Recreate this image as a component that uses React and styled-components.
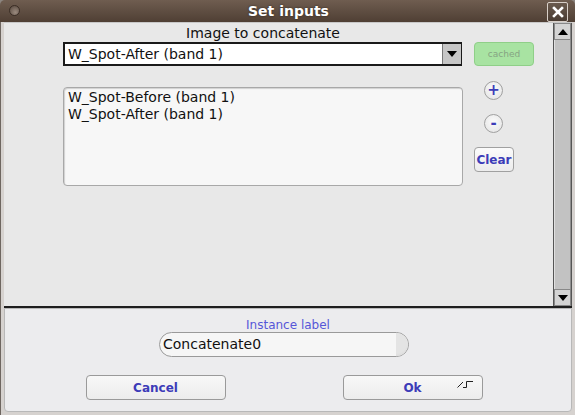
import React from 'react';
import styled, { createGlobalStyle } from 'styled-components';

const Global = createGlobalStyle`
  html, body { margin: 0; padding: 0; background: #3a3a3a; }
  body { font-family: "DejaVu Sans", "Liberation Sans", sans-serif; }
`;

function App() {
  return (
    <>
      <Global />
      <Window>
        <TitleBar>
          <Knob />
          <Title>Set inputs</Title>
          <CloseBtn>
            <svg width="12" height="12" viewBox="0 0 12 12">
              <path d="M2 2 L10 10 M10 2 L2 10" stroke="#fff" strokeWidth="2.6" strokeLinecap="square" />
            </svg>
          </CloseBtn>
        </TitleBar>
        <Frame>
          <TopPanel>
            <Content>
              <MainCol>
                <Caption>Image to concatenate</Caption>
                <Combo>
                  <ComboText>W_Spot-After (band 1)</ComboText>
                  <ComboArrow>
                    <svg width="10" height="6" viewBox="0 0 10 6"><path d="M0 0 H10 L5 6 Z" fill="#000" /></svg>
                  </ComboArrow>
                </Combo>
                <ListBox>
                  <ListItem>W_Spot-Before (band 1)</ListItem>
                  <ListItem>W_Spot-After (band 1)</ListItem>
                </ListBox>
              </MainCol>
              <SideCol>
                <CachedBtn>cached</CachedBtn>
                <RoundBtn $top={15}>+</RoundBtn>
                <RoundBtn $top={14}>-</RoundBtn>
                <ClearBtn>Clear</ClearBtn>
              </SideCol>
            </Content>
            <ScrollBar>
              <ScrollArrow>
                <svg width="10" height="6" viewBox="0 0 10 6"><path d="M0 6 H10 L5 0 Z" fill="#000" /></svg>
              </ScrollArrow>
              <Thumb />
              <ScrollArrow>
                <svg width="10" height="6" viewBox="0 0 10 6"><path d="M0 0 H10 L5 6 Z" fill="#000" /></svg>
              </ScrollArrow>
            </ScrollBar>
          </TopPanel>
          <Divider />
          <BottomPanel>
            <InstLabel>Instance label</InstLabel>
            <Field>
              Concatenate0
              <FieldCap />
            </Field>
            <ButtonRow>
              <ActionBtn>Cancel</ActionBtn>
              <ActionBtn>
                Ok
                <Corner>
                  <svg width="17" height="8" viewBox="0 0 17 8">
                    <path d="M0.5 7.5 L6 2 M6 7.5 H9.5 V1.5 H16" stroke="#222" strokeWidth="1" fill="none" />
                  </svg>
                </Corner>
              </ActionBtn>
            </ButtonRow>
          </BottomPanel>
        </Frame>
      </Window>
    </>
  );
}

export default App;

const Window = styled.div`
  width: 575px;
  height: 415px;
  display: flex;
  flex-direction: column;
  background: #8c8580;
  overflow: hidden;
`;

const TitleBar = styled.div`
  height: 22px;
  flex: none;
  display: flex;
  align-items: center;
  position: relative;
  background: linear-gradient(#6f5d50, #4f3f34);
  border-radius: 5px 5px 0 0;
`;

const Knob = styled.div`
  position: absolute;
  left: 9px;
  top: 5px;
  width: 9px;
  height: 9px;
  border-radius: 50%;
  border: 1px solid #3a2d25;
  background: radial-gradient(circle at 60% 70%, #9a8a7e, #55463c);
`;

const Title = styled.div`
  flex: 1;
  text-align: center;
  color: #fff;
  font-weight: bold;
  font-size: 14px;
  padding-left: 2px;
  text-shadow: 0 0 2px #2a1f18;
`;

const CloseBtn = styled.div`
  position: absolute;
  right: 7px;
  top: 2px;
  width: 19px;
  height: 18px;
  display: flex;
  align-items: center;
  justify-content: center;
  border: 1px solid #d8cfc8;
  border-radius: 2px;
  background: linear-gradient(#6a5a4e, #4a3c33);
`;

const Frame = styled.div`
  flex: 1;
  display: flex;
  flex-direction: column;
  padding: 0 3px 3px 3px;
  background: #d6d2cf;
  border-left: 1px solid #6e6660;
`;

const TopPanel = styled.div`
  height: 283px;
  display: flex;
  background: #e8e8e8;
  border-top: 1px solid #c8c8c8;
`;

const Content = styled.div`
  flex: 1;
  display: flex;
  padding: 2px 0 0 59px;
  gap: 11px;
`;

const MainCol = styled.div`
  width: 400px;
  display: flex;
  flex-direction: column;
`;

const Caption = styled.div`
  font-size: 14px;
  color: #111;
  text-align: center;
  height: 17px;
  line-height: 17px;
`;

const Combo = styled.div`
  height: 24px;
  box-sizing: border-box;
  display: flex;
  border: 2px solid #1a1a1a;
  border-right-width: 1px;
  background: #fff;
  width: 399px;
`;

const ComboText = styled.div`
  flex: 1;
  font-size: 14px;
  line-height: 20px;
  padding-left: 3px;
  color: #111;
`;

const ComboArrow = styled.div`
  width: 18px;
  display: flex;
  align-items: center;
  justify-content: center;
  background: #c6c6c6;
  border-left: 1px solid #777;
`;

const ListBox = styled.div`
  margin-top: 21px;
  height: 99px;
  box-sizing: border-box;
  border: 1px solid #a8a8a8;
  border-radius: 4px;
  background: #f7f7f7;
  padding: 1px 4px;
  box-shadow: inset 1px 1px 1px #d0d0d0;
`;

const ListItem = styled.div`
  font-size: 14px;
  line-height: 17px;
  color: #111;
`;

const SideCol = styled.div`
  display: flex;
  flex-direction: column;
  align-items: flex-start;
  padding-top: 17px;
`;

const CachedBtn = styled.div`
  width: 60px;
  height: 24px;
  box-sizing: border-box;
  border: 1px solid #8fcf88;
  border-radius: 4px;
  background: #a8e3a2;
  color: #86a383;
  font-size: 9px;
  display: flex;
  align-items: center;
  justify-content: center;
`;

const RoundBtn = styled.div`
  margin-top: ${p => p.$top}px;
  margin-left: 10px;
  width: 19px;
  height: 19px;
  box-sizing: border-box;
  border-radius: 50%;
  border: 1px solid #a0a0a0;
  background: radial-gradient(circle at 50% 40%, #fbfbfb, #e2e2e2);
  color: #3c3cb8;
  font-weight: bold;
  font-size: 15px;
  line-height: 16px;
  text-align: center;
`;

const ClearBtn = styled.div`
  margin-top: 14px;
  width: 40px;
  height: 25px;
  box-sizing: border-box;
  border: 1px solid #a0a0a0;
  border-radius: 4px;
  background: linear-gradient(#fbfbfb, #ececec);
  color: #3c3cb8;
  font-weight: bold;
  font-size: 12px;
  display: flex;
  align-items: center;
  justify-content: center;
`;

const ScrollBar = styled.div`
  width: 17px;
  display: flex;
  flex-direction: column;
  border-left: 1px solid #555;
  border-right: 1px solid #555;
  background: #9a9a9a;
`;

const ScrollArrow = styled.div`
  height: 15px;
  flex: none;
  display: flex;
  align-items: center;
  justify-content: center;
  background: #d4d4d4;
  border: 1px solid #888;
`;

const Thumb = styled.div`
  flex: 1;
  background: #c2c2c2;
  border-left: 1px solid #e0e0e0;
  border-right: 1px solid #909090;
`;

const Divider = styled.div`
  height: 2px;
  background: #1e1e1e;
`;

const BottomPanel = styled.div`
  flex: 1;
  display: flex;
  flex-direction: column;
  align-items: center;
  background: #ececee;
  border: 1px solid #b8b8b8;
  border-radius: 0 0 4px 4px;
  padding-top: 9px;
`;

const InstLabel = styled.div`
  font-size: 12px;
  color: #5656d8;
  line-height: 14px;
`;

const Field = styled.div`
  position: relative;
  margin-left: -8px;
  width: 250px;
  height: 25px;
  box-sizing: border-box;
  border: 1px solid #9a9a9a;
  border-radius: 13px;
  background: #f6f6f6;
  font-size: 14px;
  line-height: 23px;
  padding-left: 3px;
  color: #111;
  overflow: hidden;
`;

const FieldCap = styled.span`
  position: absolute;
  right: 0;
  top: 0;
  width: 12px;
  height: 23px;
  background: radial-gradient(circle at 0% 40%, #e4e4e4 60%, #d4d4d4);
`;

const ButtonRow = styled.div`
  margin-top: 18px;
  display: flex;
  gap: 117px;
  margin-left: -8px;
`;

const ActionBtn = styled.div`
  position: relative;
  width: 140px;
  height: 25px;
  box-sizing: border-box;
  border: 1px solid #9a9a9a;
  border-radius: 4px;
  background: linear-gradient(#f8f8f8, #ececec);
  color: #3c3cb8;
  font-weight: bold;
  font-size: 12px;
  display: flex;
  align-items: center;
  justify-content: center;
`;

const Corner = styled.span`
  position: absolute;
  right: 8px;
  top: 4px;
  display: flex;
`;
